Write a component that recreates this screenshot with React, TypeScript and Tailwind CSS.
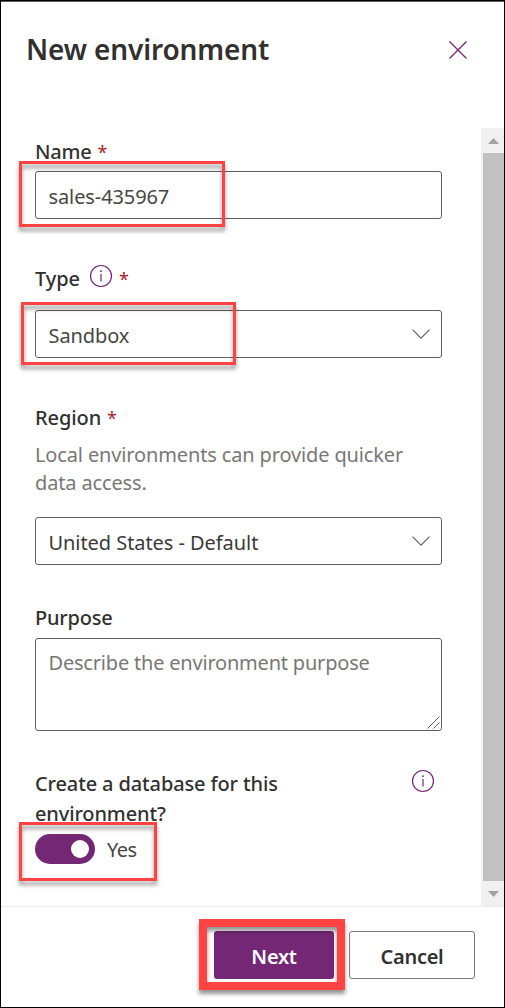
import type { ReactNode } from "react";

function Highlight({ className }: { className: string }) {
  return (
    <div
      aria-hidden="true"
      className={`pointer-events-none absolute z-10 border-[#ff4343] drop-shadow-[0_4px_2px_rgba(0,0,0,0.42)] ${className}`}
    />
  );
}

function Required() {
  return <span className="ml-1.5 text-[18px] font-normal text-[#a4262c]">*</span>;
}

function Chevron() {
  return (
    <svg width="18" height="10" viewBox="0 0 18 10" fill="none">
      <path d="M0.5 0.7 9 9.2 17.5 0.7" stroke="#605e5c" strokeWidth="1.1" />
    </svg>
  );
}

function InfoIcon() {
  return (
    <svg width="24" height="24" viewBox="0 0 24 24" fill="none">
      <circle cx="12" cy="12" r="10.5" stroke="#742774" strokeWidth="1.2" />
      <path d="M12 10v7.5" stroke="#742774" strokeWidth="1.2" />
      <circle cx="12" cy="7.2" r="0.9" fill="#742774" />
    </svg>
  );
}

function Box({ children }: { children: ReactNode }) {
  return (
    <div className="relative flex h-12 w-[407px] items-center justify-between rounded-[3px] border border-[#605e5c] pr-[11px] pl-[12.5px]">
      {children}
    </div>
  );
}

function ScrollArrow({ down = false }: { down?: boolean }) {
  return (
    <svg width="11" height="6" viewBox="0 0 11 6" className="ml-0.5">
      <path d={down ? "M0 0h11L5.5 6z" : "M0 6h11L5.5 0z"} fill="#a3a3a3" />
    </svg>
  );
}

export default function App() {
  return (
    <div className="flex h-[1008px] w-[505px] flex-col overflow-hidden border border-black bg-white font-['Noto_Sans',sans-serif] text-[20px] leading-7 tracking-[-0.1px] text-[#323130]">
      <header className="flex h-[127px] shrink-0 items-start justify-between border-t border-[#605e5c] pt-[26px] pr-[36px] pl-[25px]">
        <h1 className="pt-px text-[28px] leading-10 font-semibold tracking-[-0.13px] whitespace-nowrap">
          New environment
        </h1>
        <svg width="20" height="20" viewBox="0 0 20 20" fill="none" className="mt-3">
          <path d="m1.5 1.5 17 17m0-17-17 17" stroke="#742774" strokeWidth="1.3" />
        </svg>
      </header>

      <div className="flex h-[778px] shrink-0">
        <main className="w-[480px] pt-[10px] pl-[34px]">
          <section>
            <label className="block h-[33px] font-medium tracking-[-0.25px]">
              Name
              <Required />
            </label>
            <Box>
              <span className="pt-1 text-[#484644]">sales-435967</span>
              <Highlight className="-top-[11px] -left-[17px] h-[66px] w-[206px] border-[3px]" />
            </Box>
          </section>

          <section className="mt-[46px]">
            <div className="flex h-[45px] font-medium">
              <span>Type</span>
              <span className="-mt-px ml-[9px]">
                <InfoIcon />
              </span>
              <Required />
            </div>
            <Box>
              <span className="pt-1 text-[#484644]">Sandbox</span>
              <Chevron />
              <Highlight className="-top-[9px] -left-[15px] h-[63px] w-[215px] border-[3px]" />
            </Box>
          </section>

          <section className="mt-[46px]">
            <label className="block h-[37px] font-medium">
              Region
              <Required />
            </label>
            <p className="h-[76px] w-[400px] tracking-[-0.14px] text-[#797775]">
              Local environments can provide quicker
              <br />
              data access.
            </p>
            <Box>
              <span className="pt-1 tracking-[-0.06px] text-[#3b3a39]">United States - Default</span>
              <Chevron />
            </Box>
          </section>

          <section className="mt-[39px]">
            <label className="block h-[34px] font-medium tracking-[-0.2px]">Purpose</label>
            <div className="flex h-[93px] w-[407px] justify-between rounded-[3px] border border-[#605e5c] pt-[10px] pl-[12.5px] text-[#797775]">
              <span className="tracking-[-0.2px]">Describe the environment purpose</span>
              <svg width="14" height="14" viewBox="0 0 14 14" fill="none" className="self-end">
                <path d="M0.5 12.5 12.5 0.5M6.5 12.5l6-6" stroke="#605e5c" />
              </svg>
            </div>
          </section>

          <section className="mt-[38px]">
            <div className="flex h-[65px] w-[400px] justify-between leading-[30px] font-medium tracking-[-0.13px]">
              <p>
                Create a database for this
                <br />
                environment?
              </p>
              <span>
                <InfoIcon />
              </span>
            </div>
            <div className="relative flex h-[30px] items-center">
              <div className="flex h-[30px] w-[60px] items-center justify-end rounded-full bg-[#742774] pr-1.5">
                <div className="size-[18px] rounded-full bg-white" />
              </div>
              <span className="ml-3 pt-0.5 tracking-[-0.5px] text-[#484644]">Yes</span>
              <Highlight className="-top-[12px] -left-4 h-[59px] w-[138px] border-[3px]" />
            </div>
          </section>
        </main>

        <div className="flex w-[23px] flex-col bg-[#f0f0f0]">
          <div className="flex h-[25px] items-center justify-center">
            <ScrollArrow />
          </div>
          <div className="ml-0.5 h-[728px] bg-[#c1c1c1]" />
          <div className="flex h-[25px] items-center justify-center">
            <ScrollArrow down />
          </div>
        </div>
      </div>

      <footer className="flex flex-1 items-start border-t border-[#eaeaea] pt-6 pl-[213px] font-semibold tracking-[-0.3px]">
        <div className="relative flex h-12 w-[120px] items-center justify-center rounded-[3px] bg-[#742774] pt-1 text-white">
          Next
          <Highlight className="-top-3 -left-[15px] h-[71px] w-[146px] border-8" />
        </div>
        <div className="ml-[15px] flex h-12 w-[126px] items-center justify-center rounded-[3px] border border-[#797775] pt-1">
          Cancel
        </div>
      </footer>
    </div>
  );
}
